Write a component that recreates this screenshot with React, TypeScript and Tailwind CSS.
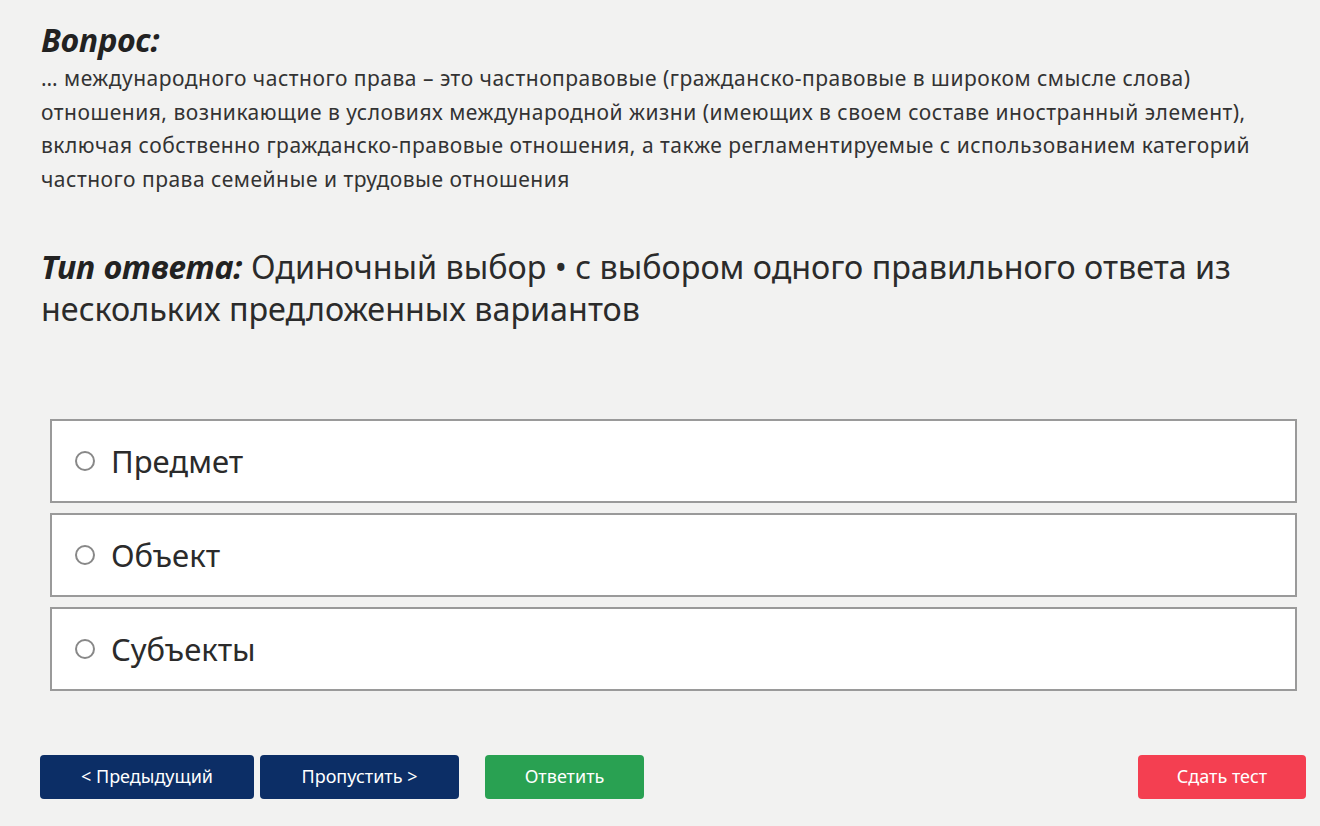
const options = ['Предмет', 'Объект', 'Субъекты'];

export default function App() {
  return (
    <div
      className="min-h-[826px] bg-[#f2f2f1] text-[#2b2b2b]"
      style={{ fontFamily: '"Noto Sans", "Open Sans", sans-serif' }}
    >
      <div className="pl-[41px] pr-[20px] pt-[20px]">
        <h2 className="text-[32px] font-bold italic leading-[40px] text-[#222]">Вопрос:</h2>
        <p className="mt-[2px] text-[21px] leading-[33.7px] tracking-[0.5px] text-[#333]">
          … международного частного права – это частноправовые (гражданско-правовые в широком смысле слова)
          <br />
          отношения, возникающие в условиях международной жизни (имеющих в своем составе иностранный элемент),
          <br />
          включая собственно гражданско-правовые отношения, а также регламентируемые с использованием категорий
          <br />
          частного права семейные и трудовые отношения
        </p>

        <p className="mt-[48px] text-[32.3px] leading-[42px] text-[#2b2b2b]">
          <span className="font-bold italic text-[#222]">Тип ответа:</span> Одиночный выбор • с выбором одного
          правильного ответа из
          <br />
          нескольких предложенных вариантов
        </p>
      </div>

      <div className="ml-[50px] mr-[23px] mt-[90px] flex flex-col gap-[10px]">
        {options.map((o) => (
          <label
            key={o}
            className="flex h-[84px] cursor-pointer items-center border-2 border-[#9a9a9a] bg-white pl-[23px]"
          >
            <span className="h-[20px] w-[20px] rounded-full border-2 border-[#888] bg-white" />
            <span className="ml-[16px] text-[31px] text-[#2b2b2b]">{o}</span>
          </label>
        ))}
      </div>

      <div className="mt-[64px] flex items-center pl-[40px] pr-[14px]">
        <button className="h-[44px] w-[214px] rounded-[4px] bg-[#0c2e66] text-[18px] text-white">
          &lt; Предыдущий
        </button>
        <button className="ml-[6px] h-[44px] w-[199px] rounded-[4px] bg-[#0c2e66] text-[18px] text-white">
          Пропустить &gt;
        </button>
        <button className="ml-[26px] h-[44px] w-[159px] rounded-[4px] bg-[#29a152] text-[18px] text-white">
          Ответить
        </button>
        <button className="ml-auto h-[44px] w-[168px] rounded-[4px] bg-[#f43f51] text-[18px] text-white">
          Сдать тест
        </button>
      </div>
    </div>
  );
}
